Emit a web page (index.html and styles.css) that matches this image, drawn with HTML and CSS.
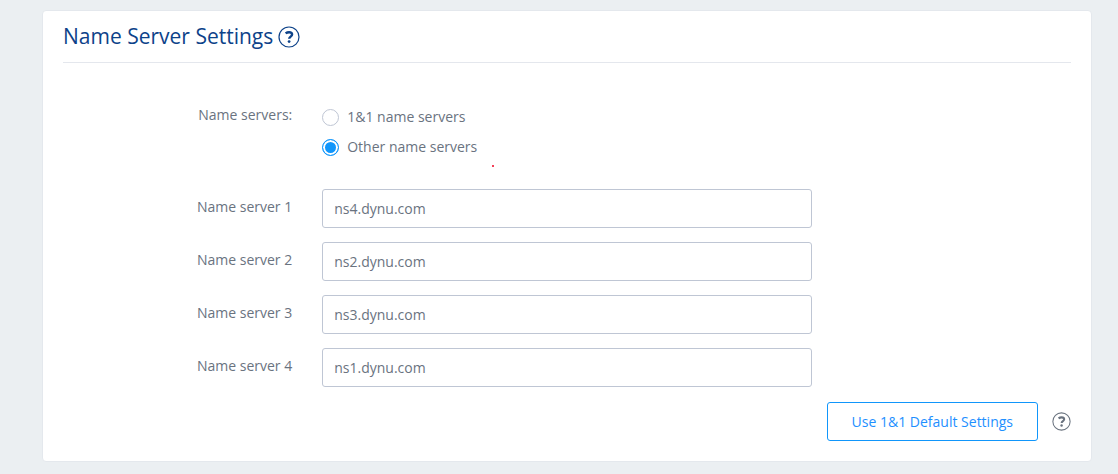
FILE: index.html
```html
<!DOCTYPE html>
<html lang="en">
<head>
<meta charset="utf-8">
<meta name="viewport" content="width=device-width, initial-scale=1">
<title>Name Server Settings</title>
<link rel="stylesheet" href="styles.css">
</head>
<body>
<main class="card">
  <header class="card-header">
    <h1 class="title">Name Server Settings</h1>
    <button class="help help-title" type="button" aria-label="Help">
      <svg class="help-icon" viewBox="0 0 22 22" aria-hidden="true">
        <circle cx="11" cy="11" r="10"/>
        <path class="mark" d="M7.6 7.4C8.8 6.5 9.9 6.2 11.1 6.2c1.9 0 3 .9 3 2.3 0 2.1-2.9 2.1-2.9 4.3"/>
        <circle class="dot" cx="11.1" cy="15.6" r="1.4"/>
      </svg>
    </button>
  </header>
  <form class="form">
    <div class="row choices" role="radiogroup" aria-labelledby="servers-label">
      <span class="label" id="servers-label">Name servers:</span>
      <div class="options">
        <label class="option"><input class="radio" type="radio" name="servers"><span>1&amp;1 name servers</span></label>
        <label class="option"><input class="radio" type="radio" name="servers" checked><span>Other name servers</span></label>
        <span class="speck"></span>
      </div>
    </div>
    <div class="row">
      <label class="label" for="ns1">Name server 1</label>
      <input class="field" id="ns1" type="text" value="ns4.dynu.com">
    </div>
    <div class="row">
      <label class="label" for="ns2">Name server 2</label>
      <input class="field" id="ns2" type="text" value="ns2.dynu.com">
    </div>
    <div class="row">
      <label class="label" for="ns3">Name server 3</label>
      <input class="field" id="ns3" type="text" value="ns3.dynu.com">
    </div>
    <div class="row">
      <label class="label" for="ns4">Name server 4</label>
      <input class="field" id="ns4" type="text" value="ns1.dynu.com">
    </div>
    <div class="actions">
      <button class="button" type="button">Use 1&amp;1 Default Settings</button>
      <button class="help help-action" type="button" aria-label="Help">
        <svg class="help-icon" viewBox="0 0 22 22" aria-hidden="true">
          <circle cx="11" cy="11" r="10"/>
          <path class="mark" d="M7.6 7.4C8.8 6.5 9.9 6.2 11.1 6.2c1.9 0 3 .9 3 2.3 0 2.1-2.9 2.1-2.9 4.3"/>
          <circle class="dot" cx="11.1" cy="15.6" r="1.4"/>
        </svg>
      </button>
    </div>
  </form>
</main>
</body>
</html>
```
FILE: styles.css
```css
*, *::before, *::after {
  box-sizing: border-box;
}

body {
  margin: 0;
  padding: 10px 26px 12px 42px;
  background: #ebeff2;
  color: #6a737f;
  font: 14px/20px "Open Sans", "Noto Sans", sans-serif;
}

.card {
  padding: 10px 20px 20px;
  border: 1px solid #e4e8ed;
  border-radius: 4px;
  background: #fff;
}

.card-header {
  display: flex;
  align-items: center;
  gap: 5px;
  height: 42px;
  padding-bottom: 10px;
  border-bottom: 1px solid #e4e7ed;
}

.title {
  margin: 0;
  padding-bottom: 2px;
  color: #0d4289;
  font-size: 21px;
  font-weight: 400;
  line-height: 28px;
}

.help {
  display: block;
  padding: 0;
  border: 0;
  background: none;
  cursor: pointer;
}

.help-title {
  width: 22px;
  height: 22px;
  color: #0d4289;
}

.help-action {
  width: 19px;
  height: 19px;
  color: #6a737f;
}

.help-icon {
  display: block;
  width: 100%;
  height: 100%;
  fill: none;
  stroke: currentColor;
  stroke-width: 1.2;
}

.help-icon .mark {
  stroke-width: 2.4;
}

.help-icon .dot {
  fill: currentColor;
  stroke: none;
}

.form {
  display: grid;
  gap: 14px;
  padding-top: 42px;
}

.row {
  display: grid;
  grid-template-columns: 229fr 489fr 229fr;
  column-gap: 30px;
}

.choices {
  padding-bottom: 18px;
}

.label {
  padding-top: 8px;
  text-align: right;
}

.choices .label {
  padding-top: 0;
}

.options {
  position: relative;
  display: grid;
  justify-items: start;
  gap: 10px;
  padding-top: 2px;
}

.option {
  display: flex;
  align-items: center;
  gap: 8px;
}

.radio {
  appearance: none;
  width: 17px;
  height: 17px;
  margin: 0;
  border: 1px solid #bfc6d4;
  border-radius: 50%;
  background: #fff;
}

.radio:checked {
  border-color: #1196fb;
  background: #1196fb;
  box-shadow: inset 0 0 0 2px #fff;
}

.speck {
  position: absolute;
  top: 60px;
  left: 170px;
  width: 2px;
  height: 2px;
  border-radius: 1px;
  background: #f00020;
}

.field {
  width: 100%;
  height: 39px;
  padding: 0 11px;
  border: 1px solid #bfc6d4;
  border-radius: 3px;
  background: #fff;
  color: inherit;
  font: inherit;
}

.actions {
  display: flex;
  justify-content: flex-end;
  align-items: center;
  gap: 14px;
  padding-top: 1px;
}

.button {
  height: 39px;
  padding: 0 24px;
  border: 1px solid #1196fb;
  border-radius: 3px;
  background: #fff;
  color: #1e90ff;
  font: inherit;
  cursor: pointer;
}
```
